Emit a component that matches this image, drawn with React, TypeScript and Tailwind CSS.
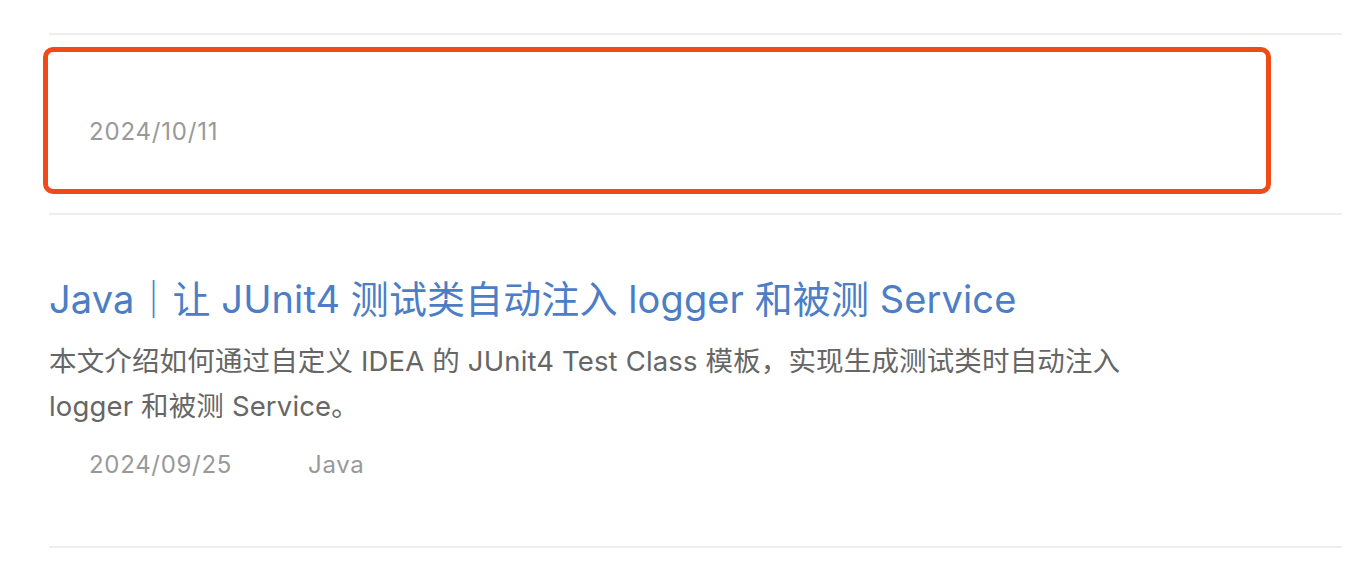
import React from "react";

const font = {
  fontFamily:
    '"Inter", "Noto Sans CJK SC", "Noto Sans", sans-serif',
};

export default function App() {
  return (
    <div
      className="w-[1364px] h-[582px] bg-white overflow-hidden pl-[49px] pr-[22px] pt-[33px]"
      style={font}
    >
      <div className="border-t-2 border-[#eeeeee] h-[180px] pt-[12px]">
        <div className="-ml-[6px] w-[1228px] h-[147px] border-[5px] border-[#f04b16] rounded-[10px] pl-[41px] pt-[64px]">
          <div className="text-[24px] leading-[32px] tracking-[0.8px] text-[#999999]">
            2024/10/11
          </div>
        </div>
      </div>
      <div className="border-t-2 border-[#eeeeee] h-[333px] pt-[60px]">
        <h2 className="text-[38px] leading-[48px] tracking-[0.1px] text-[#4b7ec6] font-normal">
          Java｜让 JUnit4 测试类自动注入 logger 和被测 Service
        </h2>
        <p className="mt-[16px] w-[1110px] text-[27.5px] leading-[45px] tracking-[0.15px] text-[#666666]">
          本文介绍如何通过自定义 IDEA 的 JUnit4 Test Class 模板，实现生成测试类时自动注入 logger 和被测 Service。
        </p>
        <div className="mt-[20px] flex items-center pl-[40px] text-[24px] leading-[32px] tracking-[0.7px] text-[#999999]">
          <span className="w-[219px]">2024/09/25</span>
          <span>Java</span>
        </div>
      </div>
      <div className="border-t-2 border-[#eeeeee]" />
    </div>
  );
}
